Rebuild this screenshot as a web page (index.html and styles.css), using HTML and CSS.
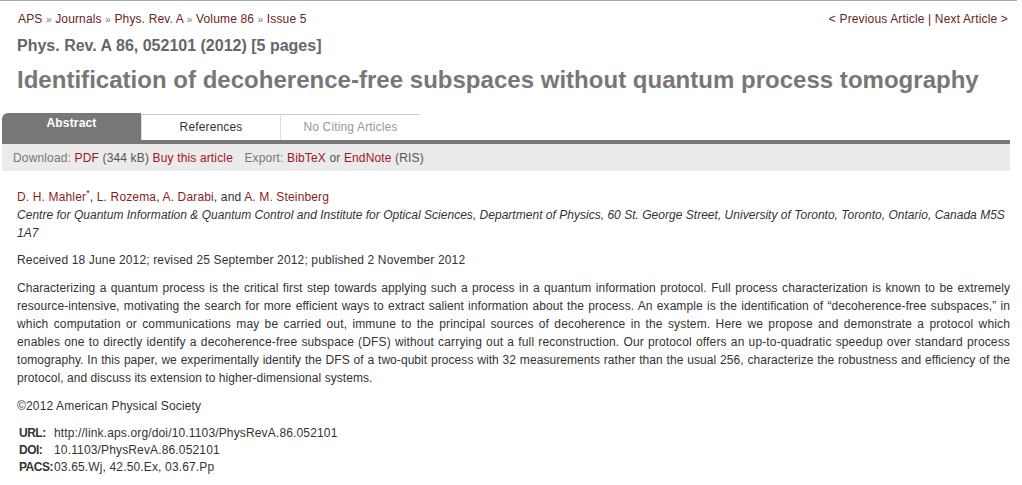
FILE: index.html
```html
<!DOCTYPE html>
<html lang="en">
<head>
    <meta charset="UTF-8">
    <title>Identification of decoherence-free subspaces without quantum process tomography</title>
    <link rel="stylesheet" href="styles.css">
</head>
<body>
    <div class="rule"></div>
    <div class="page">
        <div class="crumbs">
            <div class="trail">
                <a href="#">APS</a> <span class="sep">»</span>
                <a href="#">Journals</a> <span class="sep">»</span>
                <a href="#">Phys. Rev. A</a> <span class="sep">»</span>
                <a href="#">Volume 86</a> <span class="sep">»</span>
                <a href="#">Issue 5</a>
            </div>
            <div class="pager">
                <a href="#">&lt; Previous Article</a> | <a href="#">Next Article &gt;</a>
            </div>
        </div>

        <div class="citation">Phys. Rev. A 86, 052101 (2012) [5 pages]</div>
        <h1 class="title">Identification of decoherence-free subspaces without quantum process tomography</h1>

        <div class="tabs">
            <div class="tab tab-active">Abstract</div>
            <div class="tab">References</div>
            <div class="tab tab-off">No Citing Articles</div>
        </div>
        <div class="tools">
            <span class="label">Download:</span> <a href="#">PDF</a> (344 kB) <a href="#">Buy this article</a>
            <span class="label export">Export:</span> <a href="#">BibTeX</a> or <a href="#">EndNote</a> (RIS)
        </div>

        <div class="article">
            <div class="authors">
                <a href="#">D. H. Mahler</a><sup>*</sup>, <a href="#">L. Rozema</a>, <a href="#">A. Darabi</a>, and <a href="#">A. M. Steinberg</a>
            </div>
            <div class="affil">Centre for Quantum Information &amp; Quantum Control and Institute for Optical Sciences, Department of Physics, 60 St. George Street, University of Toronto, Toronto, Ontario, Canada M5S 1A7</div>

            <p class="dates">Received 18 June 2012; revised 25 September 2012; published 2 November 2012</p>

            <p class="abstract">Characterizing a quantum process is the critical first step towards applying such a process in a quantum information protocol. Full process characterization is known to be extremely resource-intensive, motivating the search for more efficient ways to extract salient information about the process. An example is the identification of “decoherence-free subspaces,” in <span class="loose">which computation or communications may be carried out, immune to the principal sources of decoherence in the system. Here we propose and demonstrate a protocol which enables one to directly identify a decoherence-free subspace (DFS) without carrying out a full reconstruction. Our protocol offers an up-to-quadratic speedup over standard process</span> tomography. In this paper, we experimentally identify the DFS of a two-qubit process with 32 measurements rather than the usual 256, characterize the robustness and efficiency of the protocol, and discuss its extension to higher-dimensional systems.</p>

            <p class="copy">©2012 American Physical Society</p>

            <div class="meta">
                <span class="key">URL:</span><span>http://link.aps.org/doi/10.1103/PhysRevA.86.052101</span>
                <span class="key">DOI:</span><span>10.1103/PhysRevA.86.052101</span>
                <span class="key">PACS:</span><span>03.65.Wj, 42.50.Ex, 03.67.Pp</span>
            </div>
        </div>
    </div>
</body>
</html>
```

FILE: styles.css
```css
body {
    margin: 0;
    font-family: "Liberation Sans", Arial, sans-serif;
    font-size: 12px;
    letter-spacing: 0.15px;
    color: #333;
    background: #fff;
}

a {
    color: #8a1c1c;
    text-decoration: none;
}

.rule {
    width: 1017px;
    border-top: 1px solid #a9a9a9;
}

.page {
    width: 1010px;
}

.crumbs {
    display: flex;
    justify-content: space-between;
    padding: 10px 2px 0 18px;
    line-height: 16px;
}

.crumbs .trail a {
    color: #6b2323;
}

.crumbs .sep {
    color: #777;
    font-size: 10px;
}

.pager {
    color: #6b2323;
}

.pager a {
    color: #6b2323;
}

.citation {
    margin: 8px 0 0 17px;
    font-size: 16px;
    font-weight: bold;
    line-height: 20px;
    letter-spacing: 0;
    color: #666;
}

.title {
    margin: 9px 0 0 17px;
    font-size: 24px;
    line-height: 30px;
    letter-spacing: 0.02px;
    color: #777;
}

/* tabs */
.tabs {
    display: flex;
    margin: 18px 0 0 2px;
    border-bottom: 4px solid #777;
}

.tab {
    width: 139px;
    box-sizing: border-box;
    text-align: center;
    line-height: 16px;
    color: #333;
    border-top: 1px solid #ccc;
    border-left: 1px solid #ddd;
    margin-top: 1px;
    height: 26px;
    padding-top: 4px;
}

.tab-active {
    background: #777;
    color: #fff;
    font-weight: bold;
    border: none;
    border-top-left-radius: 6px;
    margin-top: 0;
    height: 27px;
    padding-top: 2px;
}

.tab-off {
    color: #999;
    width: 140px;
}

.tools {
    margin-left: 2px;
    background: #ebebeb;
    padding: 6px 11px 0;
    height: 21px;
    line-height: 16px;
    color: #555;
}

.tools a {
    color: #a3161a;
}

.tools .label {
    color: #777;
}

.tools .export {
    margin-left: 8px;
}

/* article body */
.article {
    padding: 17px 0 0 17px;
    line-height: 18px;
}

.authors sup {
    font-size: 9px;
    line-height: 0;
}

.affil {
    font-style: italic;
    letter-spacing: 0.02px;
    padding-right: 4px;
}

.dates {
    margin: 9px 0 0;
}

.abstract {
    margin: 10px 0 0;
    letter-spacing: 0.06px;
    text-align: justify;
}

.abstract .loose {
    letter-spacing: 0.15px;
}

.copy {
    margin: 10px 0 0;
}

.meta {
    display: grid;
    grid-template-columns: 35px auto;
    margin: 10px 0 0 2px;
    line-height: 17px;
}

.meta .key {
    font-weight: bold;
    letter-spacing: -0.5px;
}
```
